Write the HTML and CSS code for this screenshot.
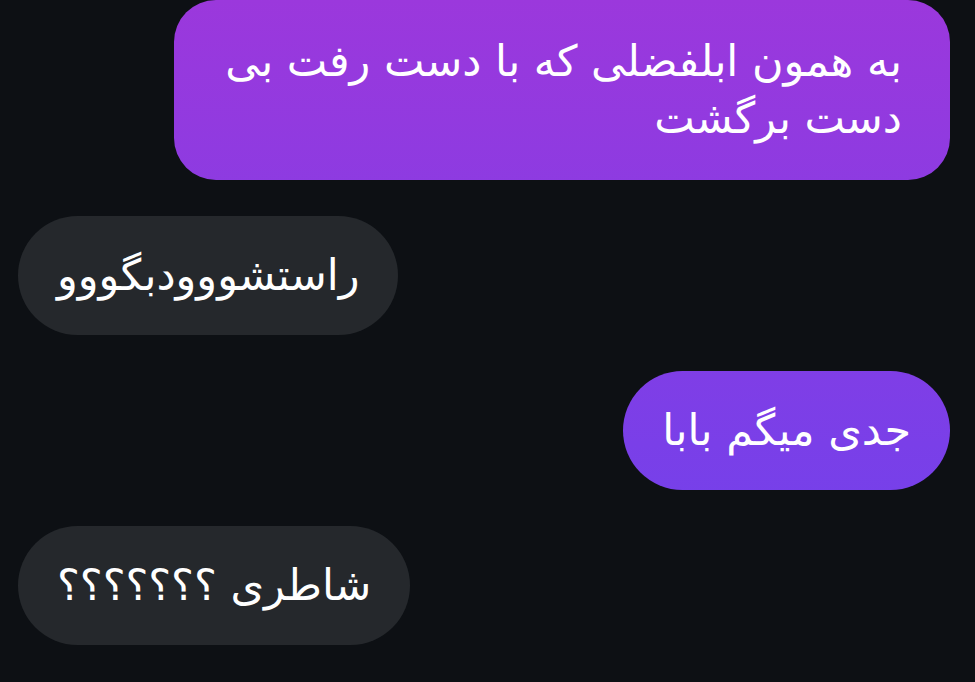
FILE: index.html
```html
<!DOCTYPE html>
<html lang="fa">
<head>
    <meta charset="UTF-8">
    <meta name="viewport" content="width=device-width, initial-scale=1.0">
    <title>گفتگو</title>
    <link rel="stylesheet" href="styles.css">
</head>
<body>
    <div class="chat">
        <div class="row row-out">
            <div class="bubble bubble-out bubble-long" dir="rtl">به همون ابلفضلی که با دست رفت بی دست برگشت</div>
        </div>
        <div class="row row-in">
            <div class="bubble bubble-in" dir="rtl">راستشووودبگووو</div>
        </div>
        <div class="row row-out">
            <div class="bubble bubble-out" dir="rtl">جدی میگم بابا</div>
        </div>
        <div class="row row-in">
            <div class="bubble bubble-in" dir="rtl">شاطری ؟؟؟؟؟؟؟</div>
        </div>
    </div>
</body>
</html>
```

FILE: styles.css
```css
* {
    margin: 0;
    padding: 0;
    box-sizing: border-box;
}

body {
    font-family: "DejaVu Sans", "Noto Sans", sans-serif;
    background: #0d1014;
    color: #fff;
    overflow: hidden;
}

.chat {
    display: flex;
    flex-direction: column;
    gap: 36px;
    padding: 0 25px 0 18px;
}

.row {
    display: flex;
}

.row-out {
    justify-content: flex-end;
}

.row-in {
    justify-content: flex-start;
}

.bubble {
    max-width: 776px;
    padding: 31px 39px;
    font-size: 43px;
    line-height: 57px;
    border-radius: 60px;
    text-align: right;
}

.bubble-long {
    padding: 33px 48px 33px 36px;
    border-radius: 42px;
}

.bubble-out {
    /* gradient is pinned to the viewport so lower bubbles turn bluer */
    background: linear-gradient(180deg, #9b38dc 0%, #7a3fe8 65%, #6c43ee 100%);
    background-attachment: fixed;
}

.bubble-in {
    background: #25282c;
}
```
